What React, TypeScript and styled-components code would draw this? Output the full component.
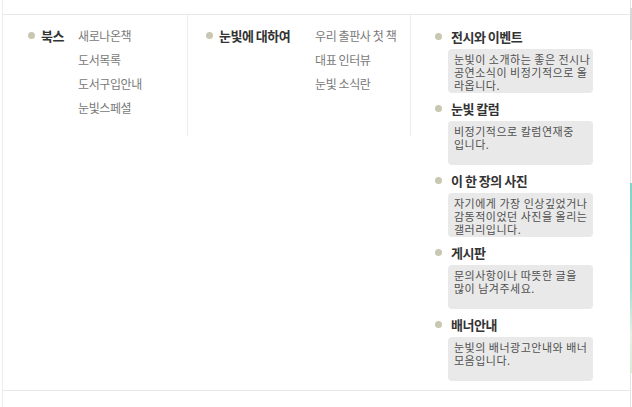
import styled, { createGlobalStyle } from 'styled-components';

const GlobalStyle = createGlobalStyle`
    html, body {
        margin: 0;
        padding: 0;
        background: #fff;
    }
    body {
        font-family: 'Noto Sans CJK KR', 'Noto Sans', sans-serif;
    }
`;

const books = ['새로나온책', '도서목록', '도서구입안내', '눈빛스페셜'];
const about = ['우리 출판사 첫 책', '대표 인터뷰', '눈빛 소식란'];

const boards = [
    { title: '전시와 이벤트', lines: ['눈빛이 소개하는 좋은 전시나', '공연소식이 비정기적으로 올', '라옵니다.'] },
    { title: '눈빛 칼럼', lines: ['비정기적으로 칼럼연재중', '입니다.'] },
    { title: '이 한 장의 사진', lines: ['자기에게 가장 인상깊었거나', '감동적이었던 사진을 올리는', '갤러리입니다.'] },
    { title: '게시판', lines: ['문의사항이나 따뜻한 글을', '많이 남겨주세요.'] },
    { title: '배너안내', lines: ['눈빛의 배너광고안내와 배너', '모음입니다.'] },
];

export default function App() {
    return (
        <>
            <GlobalStyle />
            <Page>
                <Frame>
                    <Spacer />
                    <Menu>
                        <MenuCol $width={185} $pad={25}>
                            <Head $width={50}>
                                <Bullet />
                                <HeadTitle>북스</HeadTitle>
                            </Head>
                            <SubList>
                                {books.map((b) => (
                                    <SubItem key={b}>{b}</SubItem>
                                ))}
                            </SubList>
                        </MenuCol>
                        <MenuCol $width={223} $pad={18}>
                            <Head $width={109}>
                                <Bullet />
                                <HeadTitle>눈빛에 대하여</HeadTitle>
                            </Head>
                            <SubList>
                                {about.map((b) => (
                                    <SubItem key={b}>{b}</SubItem>
                                ))}
                            </SubList>
                        </MenuCol>
                        <BoardCol>
                            {boards.map((b) => (
                                <Board key={b.title}>
                                    <BoardHead>
                                        <Bullet />
                                        <BoardTitle>{b.title}</BoardTitle>
                                    </BoardHead>
                                    <BoardDesc>
                                        {b.lines.map((l) => (
                                            <DescLine key={l}>{l}</DescLine>
                                        ))}
                                    </BoardDesc>
                                </Board>
                            ))}
                        </BoardCol>
                    </Menu>
                </Frame>
                <ScrollThumb />
                <Accent />
            </Page>
        </>
    );
}

const Page = styled.div`
    position: relative;
    width: 632px;
    height: 407px;
    overflow: hidden;
`;

const Frame = styled.div`
    margin-left: 2px;
    width: 627px;
    height: 407px;
    border-left: 1px solid #ececec;
    border-right: 1px solid #e4e4e4;
    display: flex;
    flex-direction: column;
`;

const Spacer = styled.div`
    height: 14px;
    flex: none;
`;

const Menu = styled.div`
    display: flex;
    align-items: flex-start;
    height: 375px;
    border-top: 1px solid #e8e8e8;
    border-bottom: 1px solid #e8e8e8;
`;

const MenuCol = styled.div<{ $width: number; $pad: number }>`
    display: flex;
    width: ${(p) => p.$width}px;
    height: 121px;
    box-sizing: border-box;
    padding: 8px 0 0 ${(p) => p.$pad}px;
    border-right: 1px solid #ececec;
    flex: none;
`;

const Head = styled.div<{ $width: number }>`
    display: flex;
    align-items: center;
    gap: 6px;
    width: ${(p) => p.$width}px;
    height: 24px;
    flex: none;
`;

const Bullet = styled.span`
    width: 7px;
    height: 7px;
    border-radius: 50%;
    background: #c9c7b2;
    flex: none;
`;

const HeadTitle = styled.span`
    font-size: 13px;
    font-weight: bold;
    letter-spacing: -0.5px;
    color: #333;
    white-space: nowrap;
`;

const SubList = styled.div`
    display: flex;
    flex-direction: column;
    padding-top: 1px;
`;

const SubItem = styled.span`
    height: 24px;
    line-height: 24px;
    font-size: 12px;
    letter-spacing: -0.4px;
    color: #7a7a7a;
    white-space: nowrap;
`;

const BoardCol = styled.div`
    display: flex;
    flex-direction: column;
    gap: 4px;
    padding: 10px 0 0 24px;
`;

const Board = styled.div`
    display: flex;
    flex-direction: column;
    gap: 2px;
`;

const BoardHead = styled.div`
    display: flex;
    align-items: center;
    gap: 9px;
    height: 22px;
`;

const BoardTitle = styled.span`
    font-size: 13px;
    font-weight: bold;
    letter-spacing: -0.5px;
    color: #333;
`;

const BoardDesc = styled.div`
    display: flex;
    flex-direction: column;
    margin-left: 13px;
    width: 145px;
    height: 44px;
    box-sizing: border-box;
    padding: 4px 6px 0;
    background: #e9e9e9;
    border-radius: 4px;
    color: #505050;
    white-space: nowrap;
`;

const DescLine = styled.span`
    height: 13px;
    font-size: 11px;
    line-height: 13px;
    letter-spacing: 0.5px;
`;

const ScrollThumb = styled.div`
    position: absolute;
    right: 0;
    top: 8px;
    width: 2px;
    height: 32px;
    background: #d8d8d8;
`;

const Accent = styled.div`
    position: absolute;
    right: 0;
    top: 183px;
    width: 2px;
    height: 190px;
    background: linear-gradient(#7ed6c6 0%, #9fe0d2 55%, #e4f3e6 80%, #d7ecd4 100%);
`;
